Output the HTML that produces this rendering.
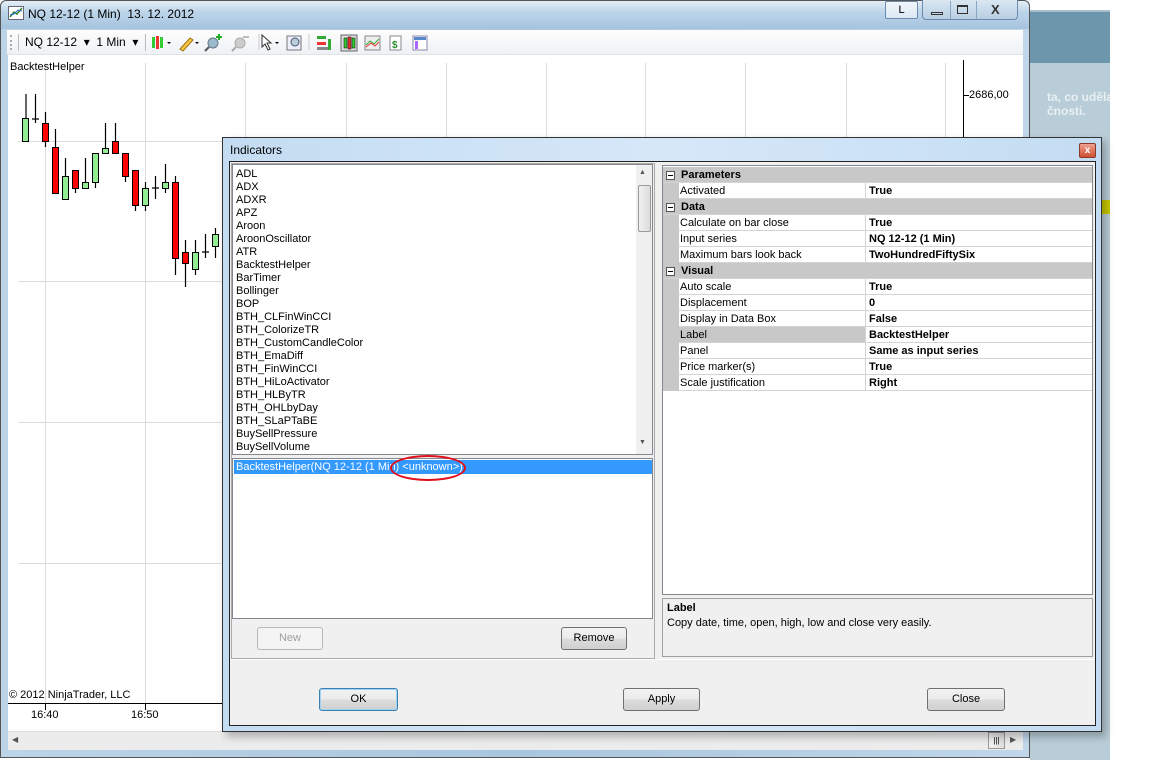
<!DOCTYPE html>
<html><head><meta charset="utf-8">
<style>
*{margin:0;padding:0;box-sizing:border-box}
body{width:1152px;height:760px;overflow:hidden;background:#fff;font-family:"Liberation Sans",sans-serif;font-size:11px;color:#000;position:relative}
.abs{position:absolute}
.btn{position:absolute;height:23px;border:1px solid #707070;border-radius:3px;background:linear-gradient(#f2f2f2,#ebebeb 50%,#dddddd 50%,#cfcfcf);text-align:center;line-height:21px;font-size:11px}
.row{position:absolute;left:0;width:430px;height:16px;border-bottom:1px solid #d4d4d4;background:#fff}
.row .k{position:absolute;left:17px;top:2px}
.row .v{position:absolute;left:206px;top:2px;font-weight:bold}
.row .sep{position:absolute;left:202px;top:0;width:1px;height:16px;background:#d4d4d4}
.row .g{position:absolute;left:0;top:0;width:16px;height:16px;background:#c8c8c8}
.cat{background:#c8c8c8;font-weight:bold}
.cat .k{left:18px}
.box{position:absolute;left:3px;top:4px;width:9px;height:9px;border:1px solid #555;background:#fff}
.box:after{content:"";position:absolute;left:1px;top:3px;width:5px;height:1px;background:#000}
.li{height:13px;line-height:13px;padding-left:3px}
</style></head><body>
<!-- right background -->
<div class="abs" style="left:1030px;top:10px;width:80px;height:2px;background:#a9c0cc"></div>
<div class="abs" style="left:1030px;top:12px;width:80px;height:51px;background:#6b96ab"></div>
<div class="abs" style="left:1030px;top:63px;width:80px;height:697px;background:#b9cdd8"></div>
<div class="abs" style="left:1030px;top:88px;width:80px;height:40px;overflow:hidden"><div style="position:absolute;left:17px;top:2px;white-space:nowrap;color:#e8f0f4;font-weight:bold;font-size:12px;line-height:14px">ta, co udělalo<br>čnosti.</div></div>
<div class="abs" style="left:1098px;top:200px;width:12px;height:14px;background:#c8c800"></div>

<!-- main window -->
<div class="abs" style="left:0;top:0;width:1030px;height:758px;border:1px solid #555;border-radius:6px 6px 0 0;background:linear-gradient(90deg,#bcd4e8,#a8c6de 50%,#c0d6ea)"></div>
<div class="abs" style="left:1px;top:1px;width:1028px;height:28px;background:linear-gradient(#e4eef7,#bcd4e9 40%,#a6c4de);border-radius:6px 6px 0 0"></div>
<svg class="abs" style="left:8px;top:6px" width="16" height="14"><rect x="0.5" y="0.5" width="15" height="13" fill="#fff" stroke="#667"/><path d="M2 11 L6 6 L9 8 L14 2" stroke="#2a8a2a" fill="none" stroke-width="1.5"/><path d="M2 9 L6 8 L10 4 L14 5" stroke="#3366cc" fill="none"/></svg>
<div class="abs" style="left:28px;top:7px;font-size:12px">NQ 12-12 (1 Min)&nbsp; 13. 12. 2012</div>
<div class="abs" style="left:885px;top:1px;width:33px;height:18px;border:1px solid #6a8cae;background:linear-gradient(#f2f7fb,#dbe8f4);border-radius:2px;text-align:center;line-height:16px;font-size:11px">L</div>
<div class="abs" style="left:922px;top:0px;width:96px;height:20px;border:1px solid #6a8cae;border-top:0;border-radius:0 0 4px 4px;background:linear-gradient(#dae7f2,#b8cfe3)"></div>
<div class="abs" style="left:950px;top:1px;width:1px;height:18px;background:#8aa6c0"></div>
<div class="abs" style="left:976px;top:1px;width:1px;height:18px;background:#8aa6c0"></div>
<div class="abs" style="left:931px;top:12px;width:12px;height:3px;border:1px solid #333"></div>
<div class="abs" style="left:957px;top:5px;width:11px;height:9px;border:1px solid #333;border-top-width:2px"></div>
<div class="abs" style="left:991px;top:2px;font-weight:bold;font-size:13px;color:#333">X</div>

<!-- toolbar -->
<div class="abs" style="left:7px;top:30px;width:1016px;height:25px;background:linear-gradient(#fdfdfd,#eef1f5);border-bottom:1px solid #e2e2e2"></div>
<div class="abs" style="left:10px;top:35px;width:2px;height:15px;border-left:2px dotted #aaa"></div>
<div class="abs" style="left:18px;top:34px;width:1px;height:17px;background:#bbb"></div>
<div class="abs" style="left:25px;top:35px;font-size:12px">NQ 12-12 &nbsp;▾&nbsp; 1 Min &nbsp;▾</div>
<div class="abs" style="left:145px;top:34px;width:1px;height:17px;background:#bbb"></div>
<svg class="abs" style="left:150px;top:33px" width="290" height="20">
<rect x="2" y="4" width="3" height="11" fill="#3c3"/><rect x="6" y="3" width="3" height="13" fill="#e33"/><rect x="10" y="4" width="3" height="11" fill="#3c3"/><path d="M17 9l2 2 2-2z" fill="#000"/>
<path d="M30 16 L40 5 L43 7 L33 18 Z" fill="#f5c542" stroke="#a07010"/><path d="M45 9l2 2 2-2z" fill="#000"/>
<circle cx="63" cy="10" r="5" fill="#9bc" stroke="#678"/><path d="M59 14 L55 18" stroke="#555" stroke-width="2"/><path d="M66 4h6M69 1v6" stroke="#2a2" stroke-width="2"/>
<circle cx="90" cy="10" r="5" fill="#ccc" stroke="#aaa"/><path d="M86 14 L82 18" stroke="#aaa" stroke-width="2"/><path d="M93 4h6" stroke="#bbb" stroke-width="2"/>
<path d="M109 1v16" stroke="#ccc"/>
<path d="M112 2 L112 14 L115 11 L118 17 L120 16 L117 10 L121 10 Z" fill="#fff" stroke="#333"/><path d="M125 9l2 2 2-2z" fill="#000"/>
<rect x="137" y="3" width="14" height="14" fill="#eef" stroke="#777"/><circle cx="145" cy="9" r="4" fill="#bcd" stroke="#456"/>
<path d="M159 1v16" stroke="#ccc"/>
<rect x="167" y="3" width="9" height="3" fill="#3a3"/><rect x="167" y="9" width="9" height="3" fill="#e33"/><rect x="167" y="14" width="12" height="3" fill="#888"/><rect x="178" y="6" width="3" height="11" fill="#3a3"/>
<rect x="191" y="2" width="16" height="16" fill="#ddd" stroke="#666"/><rect x="194" y="5" width="3" height="10" fill="#3c3" stroke="#000" stroke-width=".5"/><rect x="198" y="4" width="3" height="12" fill="#e33" stroke="#000" stroke-width=".5"/><rect x="202" y="5" width="3" height="10" fill="#3c3" stroke="#000" stroke-width=".5"/>
<rect x="215" y="3" width="15" height="14" fill="#eee" stroke="#888"/><path d="M216 12 L220 8 L224 11 L229 6" stroke="#3a3" fill="none"/><path d="M216 14 L221 10 L225 13 L229 9" stroke="#e33" fill="none"/>
<rect x="240" y="3" width="11" height="14" fill="#fff" stroke="#888"/><text x="242" y="15" font-size="10" font-weight="bold" fill="#2a8a2a" font-family="Liberation Sans">$</text>
<rect x="263" y="3" width="14" height="14" fill="#fff" stroke="#88a"/><rect x="264" y="4" width="12" height="3" fill="#58c"/><rect x="265" y="8" width="3" height="8" fill="#a6f"/>
</svg>

<!-- chart -->
<div class="abs" style="left:8px;top:55px;width:1015px;height:676px;background:#fff"></div>
<svg class="abs" style="left:8px;top:55px" width="1015" height="676">
<g stroke="#dcdcdc" stroke-width="1">
<path d="M37.5 8V648M137.5 8V648M237.5 8V648M338.5 8V648M438.5 8V648M538.5 8V648M637.5 8V648M737.5 8V648M838.5 8V648M937.5 8V648"/>
<path d="M10 86.5H955M10 226.5H955M10 367.5H955M10 508.5H955"/>
</g>
<path d="M955.5 5V648" stroke="#000"/>
<path d="M955 40.5h6" stroke="#000"/>
<path d="M0 648.5H1015" stroke="#000"/>
<path d="M37.5 648v7M137.5 648v7" stroke="#000"/>
</svg>
<svg class="abs" style="left:0;top:0" width="230" height="300">
<g stroke="#000" stroke-width="1.2">
<path d="M26 94v24M35.5 94v29M32 119h7M45.5 112v35M55.5 129v64M65.5 158v41M75.5 170v23M85.5 158v30M95.5 153v35M105.5 123v30M115.5 123v30M125.5 153v29M135.5 170v41M145.5 182v29M155.5 176v23M152 188h7M165.5 164v29M175.5 176v99M185.5 240v47M195.5 240v35M205.5 234v24M202 252h7M215.5 228v30"/>
</g>
<g stroke="#000" stroke-width="1">
<rect x="22.5" y="118.5" width="6" height="23" fill="#90ee90"/>
<rect x="42.5" y="123.5" width="6" height="18" fill="#f00"/>
<rect x="52.5" y="147.5" width="6" height="46" fill="#f00"/>
<rect x="62.5" y="176.5" width="6" height="23" fill="#90ee90"/>
<rect x="72.5" y="170.5" width="6" height="18" fill="#f00"/>
<rect x="82.5" y="182.5" width="6" height="6" fill="#90ee90"/>
<rect x="92.5" y="153.5" width="6" height="29" fill="#90ee90"/>
<rect x="102.5" y="148.5" width="6" height="5" fill="#90ee90"/>
<rect x="112.5" y="141.5" width="6" height="12" fill="#f00"/>
<rect x="122.5" y="153.5" width="6" height="23" fill="#f00"/>
<rect x="132.5" y="170.5" width="6" height="35" fill="#f00"/>
<rect x="142.5" y="188.5" width="6" height="17" fill="#90ee90"/>
<rect x="162.5" y="182.5" width="6" height="6" fill="#90ee90"/>
<rect x="172.5" y="182.5" width="6" height="76" fill="#f00"/>
<rect x="182.5" y="252.5" width="6" height="11" fill="#f00"/>
<rect x="192.5" y="252.5" width="6" height="17" fill="#90ee90"/>
<rect x="212.5" y="234.5" width="6" height="12" fill="#90ee90"/>
</g></svg>
<div class="abs" style="left:10px;top:61px">BacktestHelper</div>
<div class="abs" style="left:969px;top:89px">2686,00</div>
<div class="abs" style="left:9px;top:689px">© 2012 NinjaTrader, LLC</div>
<div class="abs" style="left:31px;top:709px">16:40</div>
<div class="abs" style="left:131px;top:709px">16:50</div>
<!-- scrollbar -->
<div class="abs" style="left:8px;top:731px;width:1015px;height:19px;background:#ececec;border-top:1px solid #ddd"></div>
<div class="abs" style="left:12px;top:735px;font-size:8px;color:#555">◀</div>
<div class="abs" style="left:988px;top:732px;width:17px;height:17px;border:1px solid #999;background:linear-gradient(90deg,#f3f3f3,#ddd);font-size:8px;text-align:center;line-height:15px">|||</div>
<div class="abs" style="left:1010px;top:735px;font-size:8px;color:#555">▶</div>

<!-- dialog shadow -->
<div class="abs" style="left:226px;top:141px;width:880px;height:596px;background:rgba(0,0,0,.25);filter:blur(4px)"></div>
<!-- dialog -->
<div class="abs" style="left:222px;top:137px;width:880px;height:595px;border:1px solid #333;background:linear-gradient(90deg,#c4dcf2,#d6e8f8 50%,#c4dcf2)"></div>
<div class="abs" style="left:230px;top:143px;font-size:12px">Indicators</div>
<div class="abs" style="left:1079px;top:143px;width:17px;height:15px;border:1px solid #8a3a2a;border-radius:2px;background:linear-gradient(#f0a090,#d05030);color:#fff;font-size:10px;font-weight:bold;text-align:center;line-height:13px">x</div>
<div class="abs" style="left:229px;top:161px;width:867px;height:565px;border:1px solid #222;background:#f0f0f0"></div>
<div class="abs" style="left:231px;top:163px;width:424px;height:496px;border:1px solid #aaa"></div>
<div class="abs" style="left:231px;top:659px;width:863px;height:1px;background:#fff"></div>
<!-- list -->
<div class="abs" style="left:232px;top:164px;width:421px;height:291px;border:1px solid #828790;background:#fff;overflow:hidden">
<div style="padding-top:3px">
<div class="li">ADL</div><div class="li">ADX</div><div class="li">ADXR</div><div class="li">APZ</div><div class="li">Aroon</div><div class="li">AroonOscillator</div><div class="li">ATR</div><div class="li">BacktestHelper</div><div class="li">BarTimer</div><div class="li">Bollinger</div><div class="li">BOP</div><div class="li">BTH_CLFinWinCCI</div><div class="li">BTH_ColorizeTR</div><div class="li">BTH_CustomCandleColor</div><div class="li">BTH_EmaDiff</div><div class="li">BTH_FinWinCCI</div><div class="li">BTH_HiLoActivator</div><div class="li">BTH_HLByTR</div><div class="li">BTH_OHLbyDay</div><div class="li">BTH_SLaPTaBE</div><div class="li">BuySellPressure</div><div class="li">BuySellVolume</div>
</div>
<div class="abs" style="left:403px;top:0;width:17px;height:289px;background:#f0f0f0"></div>
<div class="abs" style="left:406px;top:4px;font-size:7px;color:#555">▲</div>
<div class="abs" style="left:405px;top:20px;width:13px;height:47px;border:1px solid #999;border-radius:2px;background:linear-gradient(90deg,#f0f0f0,#dcdcdc)"></div>
<div class="abs" style="left:406px;top:274px;font-size:7px;color:#555">▼</div>
</div>
<div class="abs" style="left:232px;top:458px;width:421px;height:161px;border:1px solid #828790;background:#fff">
<div style="position:absolute;left:1px;top:1px;width:418px;height:14px;background:#3399ff;color:#fff;padding-left:2px;line-height:14px">BacktestHelper(NQ 12-12 (1 Min) &lt;unknown&gt;)</div>
</div>
<div class="abs" style="left:390px;top:455px;width:76px;height:26px;border:2px solid #e0101a;border-radius:50%"></div>
<div class="btn" style="left:257px;top:627px;width:66px;color:#a0a0a0;border-color:#b8b8b8;background:#f4f4f4">New</div>
<div class="btn" style="left:561px;top:627px;width:66px">Remove</div>
<!-- property grid -->
<div class="abs" style="left:662px;top:165px;width:431px;height:430px;border:1px solid #828790;background:#fff;overflow:hidden">
<div class="row cat" style="top:1px"><div class="box"></div><span class="k">Parameters</span></div>
<div class="row" style="top:17px"><div class="g"></div><span class="k">Activated</span><div class="sep"></div><span class="v">True</span></div>
<div class="row cat" style="top:33px"><div class="box"></div><span class="k">Data</span></div>
<div class="row" style="top:49px"><div class="g"></div><span class="k">Calculate on bar close</span><div class="sep"></div><span class="v">True</span></div>
<div class="row" style="top:65px"><div class="g"></div><span class="k">Input series</span><div class="sep"></div><span class="v">NQ 12-12 (1 Min)</span></div>
<div class="row" style="top:81px"><div class="g"></div><span class="k">Maximum bars look back</span><div class="sep"></div><span class="v">TwoHundredFiftySix</span></div>
<div class="row cat" style="top:97px"><div class="box"></div><span class="k">Visual</span></div>
<div class="row" style="top:113px"><div class="g"></div><span class="k">Auto scale</span><div class="sep"></div><span class="v">True</span></div>
<div class="row" style="top:129px"><div class="g"></div><span class="k">Displacement</span><div class="sep"></div><span class="v">0</span></div>
<div class="row" style="top:145px"><div class="g"></div><span class="k">Display in Data Box</span><div class="sep"></div><span class="v">False</span></div>
<div class="row" style="top:161px"><div class="g"></div><div style="position:absolute;left:16px;top:0;width:186px;height:15px;background:#c8c8c8"></div><span class="k">Label</span><div class="sep"></div><span class="v">BacktestHelper</span></div>
<div class="row" style="top:177px"><div class="g"></div><span class="k">Panel</span><div class="sep"></div><span class="v">Same as input series</span></div>
<div class="row" style="top:193px"><div class="g"></div><span class="k">Price marker(s)</span><div class="sep"></div><span class="v">True</span></div>
<div class="row" style="top:209px"><div class="g"></div><span class="k">Scale justification</span><div class="sep"></div><span class="v">Right</span></div>
</div>
<div class="abs" style="left:662px;top:598px;width:431px;height:59px;border:1px solid #a0a0a0;background:#f0f0f0">
<div style="position:absolute;left:4px;top:3px;font-weight:bold">Label</div>
<div style="position:absolute;left:4px;top:18px">Copy date, time, open, high, low and close very easily.</div>
</div>
<div class="btn" style="left:319px;top:688px;width:79px;border-color:#3c7fb1;box-shadow:inset 0 0 0 1px #9fd3f5">OK</div>
<div class="btn" style="left:623px;top:688px;width:77px">Apply</div>
<div class="btn" style="left:927px;top:688px;width:78px">Close</div>
</body></html>
